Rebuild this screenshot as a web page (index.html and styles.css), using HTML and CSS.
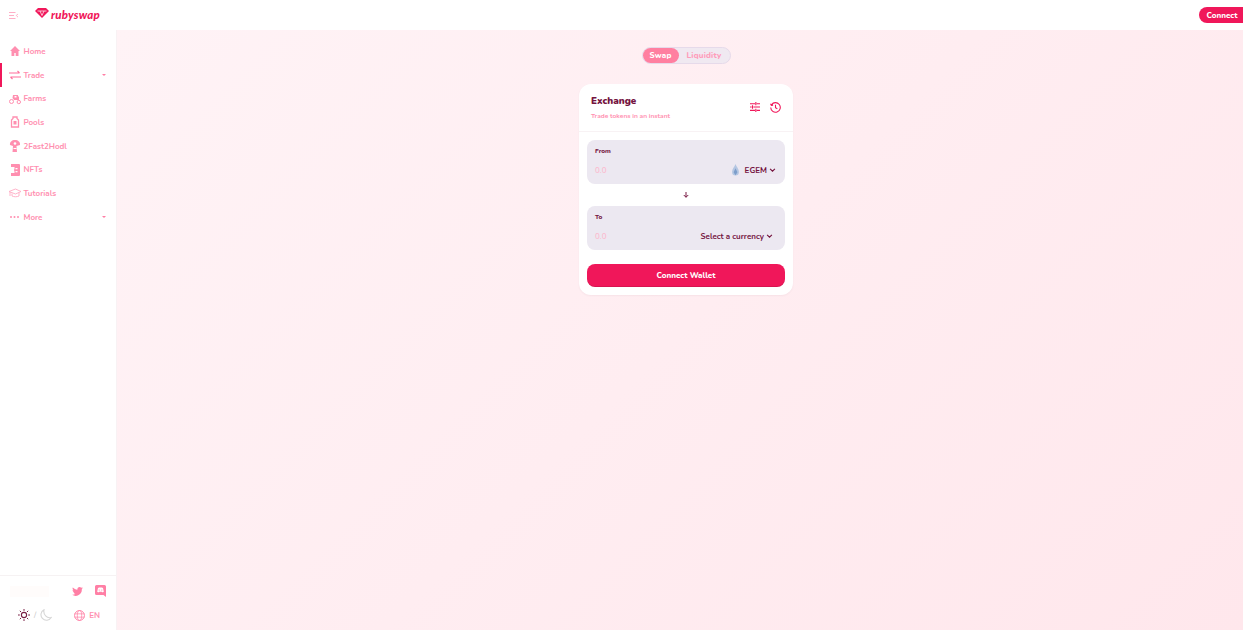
FILE: index.html
```html
<!DOCTYPE html>
<html lang="en">
<head>
  <meta charset="UTF-8">
  <title>RubySwap</title>
  <link rel="stylesheet" href="styles.css">
</head>
<body>

<header class="topbar">
  <div class="topbar-left">
    <svg class="menu-icon" viewBox="0 0 9 7" width="9" height="7"><path d="M0 .5h6.500M0 3.500h5M0 6.500h6.500M9 1.800 7.300 3.500 9 5.200" fill="none" stroke="#ffa5c0" stroke-width=".9"/></svg>
    <div class="logo">
      <svg viewBox="0 0 14 10" width="14" height="10"><path d="M3 0h8l3 3L7 10 0 3z" fill="#f0175a"/><path d="M2.500 3h9M5 3l2 4.500L9 3" stroke="#fff" stroke-width=".7" fill="none"/></svg>
      <span>rubyswap</span>
    </div>
  </div>
  <button class="connect-small">Connect</button>
</header>

<div class="layout">
  <nav class="sidebar">
    <ul class="nav">
      <li class="nav-item">
        <svg viewBox="0 0 12 12" width="12" height="12"><path d="M6 1 1 6h1.500v5h2.800V8h1.400v3h2.800V6H11z" fill="#ff8fb0"/></svg>
        <span>Home</span>
      </li>
      <li class="nav-item active">
        <svg viewBox="0 0 12 12" width="12" height="12"><path d="M0 4h10.500M8.500 2l2 2M12 8H1.500M3.500 10l-2-2" fill="none" stroke="#ff6f9c" stroke-width="1.100"/></svg>
        <span>Trade</span>
        <i class="caret"></i>
      </li>
      <li class="nav-item">
        <svg viewBox="0 0 12 12" width="12" height="12"><circle cx="2.500" cy="8.500" r="2" fill="none" stroke="#ff8fb0"/><circle cx="9.800" cy="9" r="1.700" fill="none" stroke="#ff8fb0"/><path d="M4 2h5v1l1 1v3H5L3.500 5z" fill="#ff8fb0"/><rect x="5.500" y="3" width="2" height="1.500" fill="#fff"/></svg>
        <span>Farms</span>
      </li>
      <li class="nav-item">
        <svg viewBox="0 0 12 12" width="12" height="12"><path d="M4 1h4v1.500l1.500 1.500v7h-7V4L4 2.500z" fill="none" stroke="#ff8fb0" stroke-width="1.300"/><rect x="4.500" y="5" width="3" height="3.500" fill="#ff8fb0"/></svg>
        <span>Pools</span>
      </li>
      <li class="nav-item">
        <svg viewBox="0 0 12 12" width="12" height="12"><path d="M6 0C3 0 .5 2 1 5l3 1-.5 6h4.500L7.500 6 11 5c.5-3-2-5-5-5z" fill="#ff8fb0"/><circle cx="6" cy="3.500" r="1.300" fill="#fff"/><rect x="4.500" y="8" width="3" height="1" fill="#fff"/></svg>
        <span>2Fast2Hodl</span>
      </li>
      <li class="nav-item">
        <svg viewBox="0 0 12 12" width="12" height="12"><path d="M2 0h8a1 1 0 0 1 1 1v10a1 1 0 0 1-1 1H2V9h3.500V7.500L5 6l.5-1.500V3H2z" fill="#ff8fb0"/><rect x="6.500" y="4" width="2" height="1.300" fill="#fff"/><rect x="6.500" y="7" width="2" height="1.300" fill="#fff"/></svg>
        <span>NFTs</span>
      </li>
      <li class="nav-item">
        <svg viewBox="0 0 12 12" width="12" height="12"><path d="M0 4.500 6.500 2 12 4.500 6.500 7zM3 6.500V9c2 1 5 1 7 0V5.500M1 5v4" fill="none" stroke="#ffabc4" stroke-width=".9"/></svg>
        <span>Tutorials</span>
      </li>
      <li class="nav-item">
        <svg viewBox="0 0 12 12" width="12" height="12"><circle cx="2" cy="6" r="1" fill="#ff8fb0"/><circle cx="5.500" cy="6" r="1" fill="#ff8fb0"/><circle cx="9" cy="6" r="1" fill="#ff8fb0"/></svg>
        <span>More</span>
        <i class="caret"></i>
      </li>
    </ul>

    <div class="sidebar-footer">
      <div class="footer-row">
        <div class="price-skeleton"></div>
        <div class="socials">
          <svg viewBox="0 0 12 10" width="11" height="9"><path d="M12 1.200c-.4.2-.9.300-1.400.400.500-.3.900-.8 1.100-1.400-.5.300-1 .5-1.600.6A2.500 2.500 0 0 0 5.900 3C3.900 2.900 2.100 1.900.8.500c-.6 1.100-.3 2.500.8 3.200-.4 0-.8-.1-1.100-.3 0 1.200.8 2.200 2 2.500-.4.100-.8.100-1.100 0 .3 1 1.200 1.700 2.300 1.700A5 5 0 0 1 0 8.700 7 7 0 0 0 10.800 2.500c.5-.4.900-.8 1.200-1.300z" fill="#ff7fa5"/></svg>
          <svg viewBox="0 0 11 12" width="11" height="12"><path d="M1.500 0h8A1.500 1.500 0 0 1 11 1.500V12L8.500 10h-7A1.500 1.500 0 0 1 0 8.500v-7A1.500 1.500 0 0 1 1.500 0z" fill="#ff7fa5"/><path d="M3 3c1.500-.6 3.500-.6 5 0l.8 3.700c-.6.400-1.100.5-1.600.6L6.800 6.800H4.200l-.4.500c-.5-.1-1-.2-1.600-.6z" fill="#fff"/><circle cx="4.200" cy="5" r=".6" fill="#ff7fa5"/><circle cx="6.800" cy="5" r=".6" fill="#ff7fa5"/></svg>
        </div>
      </div>
      <div class="footer-row">
        <div class="theme">
          <svg viewBox="0 0 12 12" width="12" height="12"><circle cx="6" cy="6" r="2.600" fill="none" stroke="#7a1f45" stroke-width="1.100"/><path d="M6 0v1.800M6 10.200V12M0 6h1.800M10.200 6H12M1.800 1.800 3 3M9 9l1.200 1.200M1.800 10.200 3 9M9 3l1.200-1.200" stroke="#7a1f45"/></svg>
          <span class="slash">/</span>
          <svg viewBox="0 0 12 12" width="12" height="12"><path d="M4 .8a5.500 5.500 0 1 0 7.200 7.700C7 9.500 3 6 4 .8z" fill="none" stroke="#d6d6d6" stroke-width="1.100"/></svg>
        </div>
        <div class="lang">
          <svg viewBox="0 0 12 12" width="11" height="11"><circle cx="6" cy="6" r="5.400" fill="none" stroke="#ff7fa5"/><ellipse cx="6" cy="6" rx="2.400" ry="5.400" fill="none" stroke="#ff7fa5" stroke-width=".8"/><path d="M.6 4.200h10.800M.6 7.800h10.800" stroke="#ff7fa5" stroke-width=".8"/></svg>
          <span>EN</span>
        </div>
      </div>
    </div>
  </nav>

  <main class="main">
    <div class="tabs">
      <span class="tab tab-on">Swap</span>
      <span class="tab">Liquidity</span>
    </div>

    <section class="card">
      <div class="card-head">
        <div>
          <h2>Exchange</h2>
          <p>Trade tokens in an instant</p>
        </div>
        <div class="head-icons">
          <svg viewBox="0 0 12 12" width="10" height="10"><path d="M0 2h6M8 2h4M7 0v4M0 6h2M4 6h8M3 4v4M0 10h6M8 10h4M7 8v4" fill="none" stroke="#f0175a" stroke-width="1.300"/></svg>
          <svg viewBox="0 0 12 12" width="11" height="11"><path d="M1.700 3a5.200 5.200 0 1 1-.9 3M.6 1.800 1.500 3.600l1.900-.2M6 3v3.200l2 1.200" fill="none" stroke="#f0175a" stroke-width="1.200"/></svg>
        </div>
      </div>

      <div class="card-body">
        <div class="field">
          <label>From</label>
          <div class="field-row">
            <span class="amount">0.0</span>
            <span class="token">
              <svg viewBox="0 0 10 14" width="9" height="12"><path d="M5 0C4 3 1 6 1 9a4 4.500 0 0 0 8 0c0-3-3-6-4-9z" fill="#b4c6e2"/><path d="M5 5 2.800 9.500 5 13l2.200-3.500z" fill="#7d9ecb"/></svg>
              EGEM
              <svg class="chev" viewBox="0 0 8 5" width="7" height="4"><path d="m1 1 3 3 3-3" fill="none" stroke="#75143f" stroke-width="1.400"/></svg>
            </span>
          </div>
        </div>

        <div class="arrow">
          <svg viewBox="0 0 8 8" width="6" height="6"><path d="M4 0v7M1 4l3 3 3-3" fill="none" stroke="#75143f" stroke-width="1.300"/></svg>
        </div>

        <div class="field">
          <label>To</label>
          <div class="field-row">
            <span class="amount">0.0</span>
            <span class="token">
              Select a currency
              <svg class="chev" viewBox="0 0 8 5" width="7" height="4"><path d="m1 1 3 3 3-3" fill="none" stroke="#75143f" stroke-width="1.400"/></svg>
            </span>
          </div>
        </div>

        <button class="connect-wallet">Connect Wallet</button>
      </div>
    </section>
  </main>
</div>

</body>
</html>
```

FILE: styles.css
```css
* {
  box-sizing: border-box;
}

body {
  margin: 0;
  height: 630px;
  overflow: hidden;
  font-family: 'Nunito', 'Noto Sans', sans-serif;
  color: #75143f;
  background: #fff;
}

.topbar {
  height: 30px;
  display: flex;
  justify-content: space-between;
  align-items: center;
  background: #fff;
}

.topbar-left {
  display: flex;
  align-items: center;
  gap: 17px;
  padding-left: 9px;
}

.menu-icon {
  display: block;
}

.logo {
  display: flex;
  align-items: center;
  gap: 2px;
  margin-top: -1px;
}

.logo svg {
  margin-top: -3px;
}

.logo span {
  font-family: 'Lato', sans-serif;
  font-size: 11.500px;
  font-weight: 900;
  font-style: italic;
  letter-spacing: .2px;
  color: #f0175a;
}

.connect-small {
  width: 44px;
  height: 16px;
  padding: 0 0 0 2px;
  border: none;
  border-radius: 8px 0 0 8px;
  background: #f0175a;
  color: #fff;
  font-family: inherit;
  font-size: 8px;
  font-weight: 800;
}

.layout {
  display: flex;
  height: 600px;
}

.sidebar {
  flex: 0 0 117px;
  display: flex;
  flex-direction: column;
  justify-content: space-between;
  background: #fff;
  border-right: 1px solid #f8f2f4;
}

.nav {
  list-style: none;
  margin: 0;
  padding: 9.500px 0 0;
}

.nav-item {
  height: 23.700px;
  display: flex;
  align-items: center;
  gap: 3px;
  padding: 0 10px 0 8.500px;
  font-size: 8px;
  font-weight: 700;
  color: #ff8fb0;
}

.nav-item span {
  flex: 1;
}

.nav-item.active {
  box-shadow: inset 2px 0 0 #f0175a;
}

.caret {
  width: 0;
  height: 0;
  border-left: 2px solid transparent;
  border-right: 2px solid transparent;
  border-top: 2px solid #ff7fa5;
}

.sidebar-footer {
  height: 55px;
  padding: 3px 10px 0 10px;
  border-top: 1px solid #f6f2f3;
}

.footer-row {
  height: 24px;
  display: flex;
  justify-content: space-between;
  align-items: center;
}

.price-skeleton {
  width: 39px;
  height: 11px;
  background: #fffcfb;
}

.socials {
  display: flex;
  align-items: center;
  gap: 12px;
}

.theme {
  display: flex;
  align-items: center;
  gap: 4px;
  margin-left: 8px;
}

.slash {
  font-size: 8px;
  color: #bbb;
}

.lang {
  display: flex;
  align-items: center;
  gap: 4px;
  margin-right: 6px;
  font-size: 8px;
  font-weight: 700;
  color: #ff8fb0;
}

.main {
  flex: 1;
  display: flex;
  flex-direction: column;
  align-items: center;
  padding: 17px 0 0 12px;
  background: linear-gradient(135deg, #fff3f6 0%, #ffe7ec 100%);
}

.tabs {
  width: 89px;
  height: 17px;
  display: flex;
  align-items: center;
  border: 1px solid #e6daea;
  border-radius: 9px;
  background: #f0e9f1;
}

.tab {
  height: 15px;
  flex: 1;
  display: flex;
  justify-content: center;
  align-items: center;
  font-size: 8px;
  font-weight: 800;
  letter-spacing: .2px;
  color: #ff9cba;
}

.tab-on {
  flex: 0 0 36px;
  border-radius: 8px;
  background: #ff7fa0;
  color: #fff;
}

.card {
  width: 214px;
  height: 211px;
  margin-top: 20px;
  border-radius: 12px;
  background: #fff;
  box-shadow: 0 1px 2px rgba(120, 60, 90, .06);
}

.card-head {
  height: 48px;
  display: flex;
  justify-content: space-between;
  align-items: center;
  padding: 0 12px 1px;
  border-bottom: 1px solid #f8f2f4;
}

.card-head h2 {
  margin: 0;
  font-size: 9.800px;
  font-weight: 900;
  line-height: 14px;
  color: #75143f;
}

.card-head p {
  margin: 3px 0 0;
  font-size: 6.600px;
  font-weight: 700;
  line-height: 10px;
  color: #ff8fb0;
}

.head-icons {
  display: flex;
  align-items: center;
  gap: 10px;
}

.head-icons svg {
  display: block;
}

.card-body {
  padding: 8px;
}

.field {
  height: 44px;
  padding: 6px 9px 0 8px;
  border-radius: 8px;
  background: #ece8f1;
}

.field label {
  display: block;
  font-size: 6.500px;
  font-weight: 800;
  line-height: 10px;
}

.field-row {
  display: flex;
  justify-content: space-between;
  align-items: center;
  height: 16px;
  margin-top: 6px;
}

.amount {
  font-size: 8px;
  font-weight: 600;
  color: #fbbcd0;
}

.token {
  display: flex;
  align-items: center;
  gap: 2px;
  font-size: 8px;
  font-weight: 700;
}

.token svg:first-child {
  margin-right: 3px;
}

.chev {
  display: block;
}

.arrow {
  height: 22px;
  padding-bottom: 1px;
  display: flex;
  justify-content: center;
  align-items: center;
}

.connect-wallet {
  width: 198px;
  height: 23px;
  margin-top: 14px;
  border: none;
  border-radius: 8px;
  background: #f0175a;
  box-shadow: inset 0 -1px 0 rgba(0, 0, 0, .1);
  color: #fff;
  font-family: inherit;
  font-size: 8px;
  font-weight: 800;
}
```
